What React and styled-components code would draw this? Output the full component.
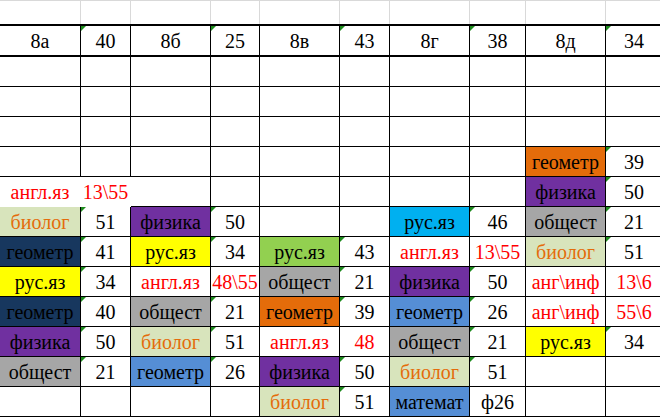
import styled, { createGlobalStyle, css } from "styled-components"

const SERIF = `"Times New Roman", "Liberation Serif", "DejaVu Serif", serif`

const GlobalStyle = createGlobalStyle`
  html, body {
    margin: 0;
    padding: 0;
    background: #fff;
    overflow: hidden;
    font-family: ${SERIF};
  }
  * {
    box-sizing: border-box;
  }
`

// цвета заливки как в Excel
const ORANGE = "#E46C0A"
const PURPLE = "#7030A0"
const NAVY = "#17375E"
const LGREEN = "#D8E4BC"
const YELLOW = "#FFFF00"
const GREEN = "#92D050"
const GREY = "#A6A6A6"
const CYAN = "#00B0F0"
const BLUE = "#558ED5"
const RED = "#FF0000"
const BIO = "#E46C0A"

const S = (t, bg, color) => ({ t, bg, color })
const N = (t) => ({ t, mark: true })
const R = (t) => ({ t, color: RED })
const BIOLOG = S("биолог", LGREEN, BIO)
const E = null

const header = [
    { t: "8а" }, N("40"), { t: "8б" }, N("25"), { t: "8в" },
    N("43"), { t: "8г" }, N("38"), { t: "8д" }, N("34"),
]

const rows = [
    [E, E, E, E, E, E, E, E, E, E],
    [E, E, E, E, E, E, E, E, E, E],
    [E, E, E, E, E, E, E, E, E, E],
    [E, E, E, E, E, E, E, E, S("геометр", ORANGE), N("39")],
    [
        { ...R("англ.яз"), open: true }, { ...R("13\\55"), open: true },
        E, E, E, E, E, E, S("физика", PURPLE), N("50"),
    ],
    [
        BIOLOG, N("51"), S("физика", PURPLE), N("50"), E, E,
        S("рус.яз", CYAN), N("46"), S("общест", GREY), N("21"),
    ],
    [
        S("геометр", NAVY), N("41"), S("рус.яз", YELLOW), N("34"), S("рус.яз", GREEN), N("43"),
        R("англ.яз"), R("13\\55"), BIOLOG, N("51"),
    ],
    [
        S("рус.яз", YELLOW), N("34"), R("англ.яз"), R("48\\55"), S("общест", GREY), N("21"),
        S("физика", PURPLE), N("50"), R("анг\\инф"), R("13\\6"),
    ],
    [
        S("геометр", NAVY), N("40"), S("общест", GREY), N("21"), S("геометр", ORANGE), N("39"),
        S("геометр", BLUE), N("26"), R("анг\\инф"), R("55\\6"),
    ],
    [
        S("физика", PURPLE), N("50"), BIOLOG, N("51"), R("англ.яз"), R("48"),
        S("общест", GREY), N("21"), S("рус.яз", YELLOW), N("34"),
    ],
    [
        S("общест", GREY), N("21"), S("геометр", BLUE), N("26"), S("физика", PURPLE), N("50"),
        BIOLOG, N("51"), E, E,
    ],
    [E, E, E, E, BIOLOG, N("51"), S("математ", BLUE), { t: "ф26" }, E, E],
]

const App = () => {
    return (
        <>
            <GlobalStyle />
            <Sheet>
                {header.map((_, i) => (
                    <BlankCell key={"g" + i} />
                ))}
                {header.map((c, i) => (
                    <HeadCell key={"h" + i} $mark={c.mark}>
                        {c.t}
                    </HeadCell>
                ))}
                {rows.map((row, r) =>
                    row.map((c, i) => (
                        <Cell
                            key={r + "-" + i}
                            $bg={c?.bg}
                            $color={c?.color}
                            $mark={c?.mark}
                            $open={c?.open}
                        >
                            {c?.t}
                        </Cell>
                    ))
                )}
            </Sheet>
        </>
    )
}

const Sheet = styled.div`
  display: grid;
  grid-template-columns: 81px 50px 80px 49px 80px 50px 80px 56px 80px 57px;
  grid-template-rows: 24px 33px repeat(12, 30px);
  width: 663px;
  font-family: ${SERIF};
  font-size: 20px;
  color: #000;
`

const cellBase = css`
  position: relative;
  display: flex;
  align-items: flex-end;
  justify-content: center;
  white-space: nowrap;
  line-height: normal;
  padding-bottom: 2px;
  border-right: 1px solid #000;
`

const markStyle = css`
  &::before {
    content: "";
    position: absolute;
    top: 0;
    left: 0;
    width: 0;
    height: 0;
    border-top: 5px solid #1e8c1e;
    border-right: 5px solid transparent;
  }
`

const BlankCell = styled.div`
  border-top: 1px solid #d9d9d9;
  border-right: 1px solid #d9d9d9;
`

const HeadCell = styled.div`
  ${cellBase}
  border-top: 2px solid #000;
  border-bottom: 2px solid #000;
  ${({ $mark }) => $mark && markStyle}
`

const Cell = styled.div`
  ${cellBase}
  border-bottom: 1px solid #000;
  background: ${({ $bg }) => $bg || "#fff"};
  color: ${({ $color }) => $color || "#000"};
  ${({ $open }) =>
        $open &&
        css`
      border-right-color: transparent;
      border-bottom-color: transparent;
      overflow: visible;
      z-index: 1;
    `}
  ${({ $mark }) => $mark && markStyle}
`

export default App
